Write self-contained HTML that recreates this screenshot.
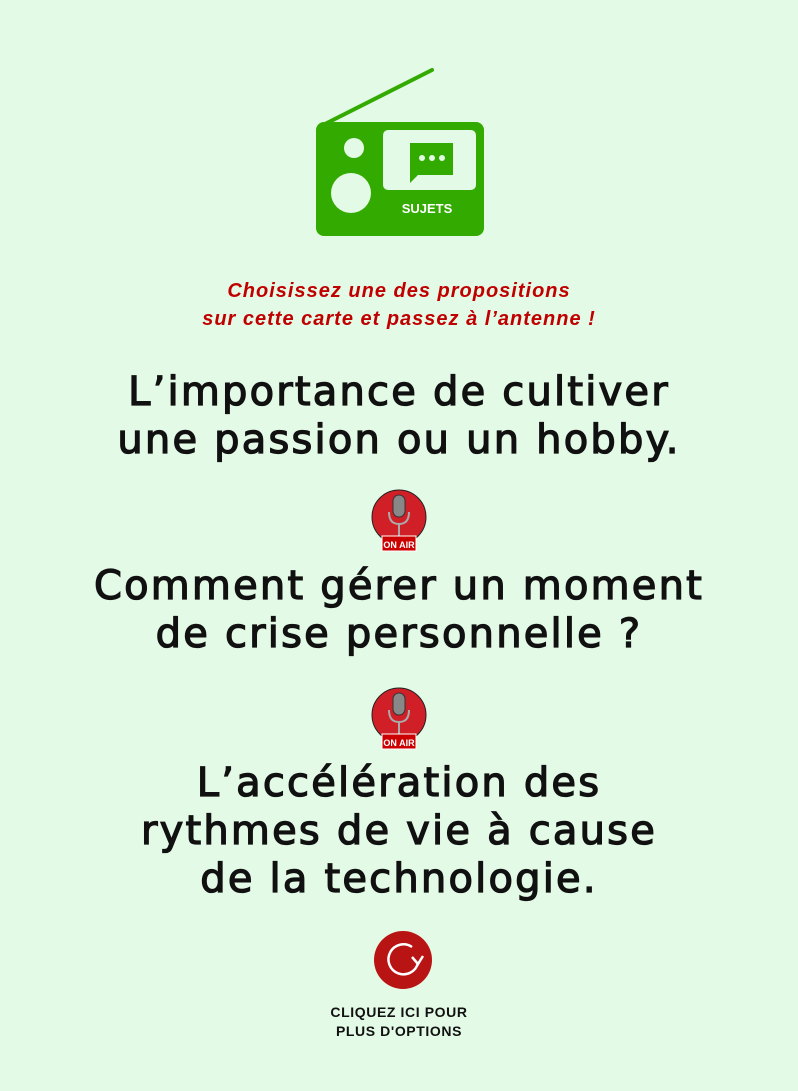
<!DOCTYPE html>
<html><head><meta charset="utf-8"><style>
html,body{margin:0;padding:0}
body{width:798px;height:1091px;background:#e3fae6;position:relative;overflow:hidden;font-family:"DejaVu Sans","Liberation Sans",sans-serif}
.abs{position:absolute;left:0;width:798px;text-align:center}
.red{color:#c00000;font-family:"Liberation Sans",sans-serif;font-weight:bold;font-style:italic;font-size:20px;letter-spacing:1px;line-height:28px}
.t{font-weight:normal;font-size:40px;line-height:48px;color:#111;letter-spacing:2.2px;-webkit-text-stroke:1.3px #111}
.small{font-family:"Liberation Sans",sans-serif;font-weight:bold;font-size:14px;letter-spacing:0.6px;line-height:19px;color:#111}
</style></head><body>
<svg style="position:absolute;left:0;top:0" width="798" height="260">
 <line x1="325" y1="124" x2="432" y2="70" stroke="#33aa00" stroke-width="4" stroke-linecap="round"/>
 <rect x="316" y="122" width="168" height="114" rx="8" fill="#33aa00"/>
 <circle cx="354" cy="148" r="10" fill="#e3fae6"/>
 <circle cx="351" cy="193" r="20" fill="#e3fae6"/>
 <rect x="383" y="130" width="93" height="60" rx="5" fill="#e3fae6"/>
 <path d="M410 143 H453 V175 H418 L410 183 Z" fill="#33aa00"/>
 <circle cx="422" cy="158" r="3" fill="#e3fae6"/><circle cx="432" cy="158" r="3" fill="#e3fae6"/><circle cx="442" cy="158" r="3" fill="#e3fae6"/>
 <text x="427" y="213" text-anchor="middle" fill="#fff" font-family="Liberation Sans" font-weight="bold" font-size="13">SUJETS</text>
</svg>
<div class="abs red" style="top:277px">Choisissez une des propositions<br>sur cette carte et passez à l’antenne !</div>
<div class="abs t" style="top:368px">L’importance de cultiver<br>une passion ou un hobby.</div>
<svg style="position:absolute;left:370px;top:488px" width="60" height="66"><g>
 <circle cx="29" cy="29" r="27" fill="#d01f26" stroke="#222" stroke-width="1"/>
 <rect x="23" y="7" width="12" height="22" rx="6" fill="#888" stroke="#333"/>
 <path d="M19 24 Q19 36 29 36 Q39 36 39 24" stroke="#aaa" stroke-width="2" fill="none"/>
 <line x1="29" y1="36" x2="29" y2="48" stroke="#aaa" stroke-width="2"/>
 <rect x="12" y="48" width="34" height="15" fill="#c00" stroke="#fff" stroke-width="1"/>
 <text x="29" y="60" text-anchor="middle" fill="#fff" font-family="Liberation Sans" font-weight="bold" font-size="9">ON AIR</text></g></svg>
<div class="abs t" style="top:562px">Comment gérer un moment<br>de crise personnelle ?</div>
<svg style="position:absolute;left:370px;top:686px" width="60" height="66"><g>
 <circle cx="29" cy="29" r="27" fill="#d01f26" stroke="#222" stroke-width="1"/>
 <rect x="23" y="7" width="12" height="22" rx="6" fill="#888" stroke="#333"/>
 <path d="M19 24 Q19 36 29 36 Q39 36 39 24" stroke="#aaa" stroke-width="2" fill="none"/>
 <line x1="29" y1="36" x2="29" y2="48" stroke="#aaa" stroke-width="2"/>
 <rect x="12" y="48" width="34" height="15" fill="#c00" stroke="#fff" stroke-width="1"/>
 <text x="29" y="60" text-anchor="middle" fill="#fff" font-family="Liberation Sans" font-weight="bold" font-size="9">ON AIR</text></g></svg>
<div class="abs t" style="top:759px">L’accélération des<br>rythmes de vie à cause<br>de la technologie.</div>
<svg style="position:absolute;left:372px;top:930px" width="62" height="62">
 <circle cx="31" cy="30" r="29" fill="#b81414"/>
 <path d="M40 17 A15 15 0 1 0 46 33" stroke="#fff" stroke-width="2.5" fill="none"/>
 <path d="M40 27 L46 34 L51 26" stroke="#fff" stroke-width="2.5" fill="none"/>
</svg>
<div class="abs small" style="top:1003px">CLIQUEZ ICI POUR<br>PLUS D'OPTIONS</div>
</body></html>
